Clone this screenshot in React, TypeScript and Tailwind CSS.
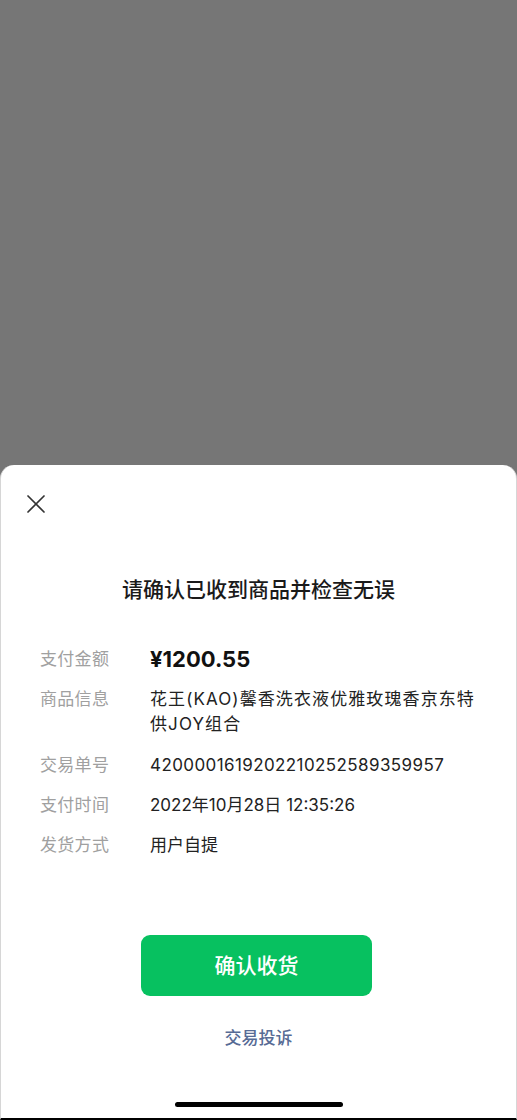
import React from "react";

const rows: { label: string; value: string; cls: string }[] = [
  { label: "支付金额", value: "¥1200.55", cls: "text-[22px] font-bold leading-[24px] text-[#111]" },
  { label: "商品信息", value: "花王(KAO)馨香洗衣液优雅玫瑰香京东特供JOY组合", cls: "text-[17px] leading-[25px] tracking-[1.1px] text-[#222]" },
  { label: "交易单号", value: "4200001619202210252589359957", cls: "text-[17px] leading-[24px] tracking-[0.4px] text-[#222]" },
  { label: "支付时间", value: "2022年10月28日 12:35:26", cls: "text-[17px] leading-[24px] text-[#222]" },
  { label: "发货方式", value: "用户自提", cls: "text-[17px] leading-[24px] text-[#222]" },
];

export default function App() {
  return (
    <div
      className="flex h-[1120px] w-full flex-col bg-[#767676]"
      style={{ fontFamily: '"Inter", "Noto Sans CJK SC", sans-serif' }}
    >
      <div className="h-[465px] shrink-0" />
      <div className="flex flex-1 flex-col rounded-t-[14px] border-x border-b-2 border-x-[#d6d6d6] border-b-black bg-white">
        <button className="ml-[25px] mt-[29px] h-[20px] w-[20px]" aria-label="close">
          <svg viewBox="0 0 20 20" width="20" height="20" fill="none" stroke="#333" strokeWidth="1.7" strokeLinecap="round">
            <path d="M2 2 L18 18 M18 2 L2 18" />
          </svg>
        </button>
        <h1 className="mt-[62px] text-center text-[21px] font-medium leading-[28px] text-[#1a1a1a]">
          请确认已收到商品并检查无误
        </h1>
        <div className="mt-[43px] flex flex-col gap-[16px] pl-[39px] pr-[32px]">
          {rows.map((r) => (
            <div key={r.label} className="flex items-start">
              <div className="w-[110px] shrink-0 text-[17px] leading-[24px] tracking-[0.3px] text-[#a0a0a0]">{r.label}</div>
              <div className={"flex-1 " + r.cls}>{r.value}</div>
            </div>
          ))}
        </div>
        <div className="mt-[78px] flex justify-center pr-[4px]">
          <button className="flex h-[61px] w-[231px] items-center justify-center rounded-[9px] bg-[#07c160] text-[21px] font-medium text-white">
            确认收货
          </button>
        </div>
        <div className="mt-[30px] text-center text-[17px] font-medium leading-[24px] text-[#576b95]">交易投诉</div>
        <div className="mt-[52px] flex justify-center">
          <div className="h-[5px] w-[168px] rounded-full bg-black" />
        </div>
      </div>
    </div>
  );
}
